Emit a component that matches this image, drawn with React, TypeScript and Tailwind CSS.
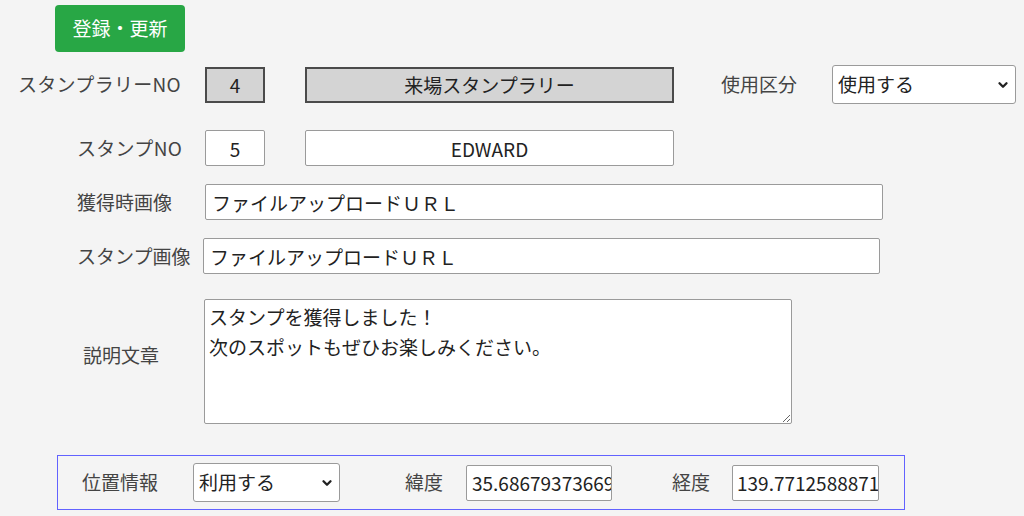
import { ChevronDown } from 'lucide-react';

const font = "font-['Noto_Sans_CJK_JP','Noto_Sans',sans-serif]";

function Select({ value, className }: { value: string; className: string }) {
  return (
    <div className={`relative ${className}`}>
      <select
        defaultValue={value}
        className="h-full w-full appearance-none rounded-[3px] border border-[#9a9a9a] bg-white pl-[5px] text-[19px] text-[#222] outline-none"
      >
        <option>{value}</option>
      </select>
      <ChevronDown className="pointer-events-none absolute right-[6px] top-1/2 h-[14px] w-[14px] -translate-y-1/2 text-[#222]" strokeWidth={4} />
    </div>
  );
}

export default function App() {
  const whiteInput =
    'h-[36px] rounded-[2px] border border-[#9a9a9a] bg-white text-[19px] text-[#222] outline-none';
  const grayInput =
    'h-[36px] border-2 border-[#4a4a4a] bg-[#d4d4d4] text-[19px] text-[#222] text-center outline-none';

  return (
    <div className={`min-h-[516px] w-full bg-[#f4f4f4] text-[19px] text-[#444] ${font}`}>
      <div className="pl-[55px] pt-[5px]">
        <button className="h-[47px] w-[130px] rounded-[4px] bg-[#28a745] text-[19px] text-white">
          登録・更新
        </button>
      </div>

      <div className="mt-[13px] flex h-[39px] items-center">
        <span className="w-[205px] pl-[18px] tracking-[0.3px]">スタンプラリーNO</span>
        <input readOnly value="4" className={`${grayInput} w-[60px]`} />
        <input readOnly value="来場スタンプラリー" className={`${grayInput} ml-[40px] w-[369px]`} />
        <span className="ml-[47px] w-[111px]">使用区分</span>
        <Select value="使用する" className="h-[39px] w-[184px]" />
      </div>

      <div className="mt-[26px] flex h-[36px] items-center">
        <span className="w-[205px] pl-[77px] tracking-[0.3px]">スタンプNO</span>
        <input readOnly value="5" className={`${whiteInput} w-[60px] text-center`} />
        <input readOnly value="EDWARD" className={`${whiteInput} ml-[40px] w-[369px] text-center`} />
      </div>

      <div className="mt-[18px] flex h-[36px] items-center">
        <span className="w-[205px] pl-[77px]">獲得時画像</span>
        <input readOnly value="ファイルアップロードＵＲＬ" className={`${whiteInput} w-[678px] pl-[6px]`} />
      </div>

      <div className="mt-[18px] flex h-[36px] items-center">
        <span className="w-[203px] pl-[77px]">スタンプ画像</span>
        <input readOnly value="ファイルアップロードＵＲＬ" className={`${whiteInput} w-[677px] pl-[6px]`} />
      </div>

      <div className="mt-[25px] flex items-center">
        <span className="-mt-[12px] w-[204px] pl-[83px]">説明文章</span>
        <textarea
          readOnly
          defaultValue={'スタンプを獲得しました！\n次のスポットもぜひお楽しみください。'}
          className="h-[125px] w-[588px] rounded-[2px] border border-[#9a9a9a] bg-white pl-[4px] pt-[2px] text-[19px] leading-[30px] text-[#222] outline-none"
        />
      </div>

      <div className="ml-[57px] mt-[31px] flex h-[55px] w-[848px] items-center border border-[#6262ff]">
        <span className="w-[135px] pl-[24px]">位置情報</span>
        <Select value="利用する" className="h-[39px] w-[147px]" />
        <span className="ml-[65px] w-[61px]">緯度</span>
        <input readOnly value="35.68679373669" className={`${whiteInput} w-[146px] pl-[5px]`} />
        <span className="ml-[60px] w-[60px]">経度</span>
        <input readOnly value="139.77125888718" className={`${whiteInput} w-[147px] pl-[4px]`} />
      </div>
    </div>
  );
}
